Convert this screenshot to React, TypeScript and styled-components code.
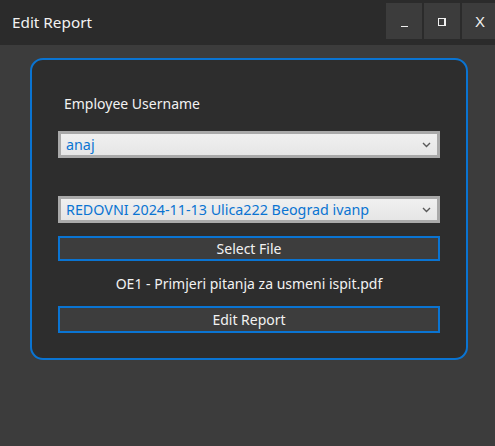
import React from "react";
import styled, { createGlobalStyle } from "styled-components";

const Global = createGlobalStyle`
  html, body { margin: 0; padding: 0; background: #3c3c3c; }
  body { font-family: "Noto Sans", "Open Sans", sans-serif; }
`;

const Window = styled.div`
  width: 495px;
  height: 446px;
  display: flex;
  flex-direction: column;
  background: #3c3c3c;
  overflow: hidden;
`;

const TitleBar = styled.div`
  height: 45px;
  flex: none;
  display: flex;
  align-items: center;
  background: #2b2b2b;
  padding-left: 12px;
`;

const Title = styled.div`
  flex: 1;
  color: #f2f2f2;
  font-size: 15.3px;
  margin-top: -1px;
`;

const WinButtons = styled.div`
  align-self: flex-start;
  margin-top: 3px;
  display: flex;
  gap: 2px;
  margin-right: -3px;
`;

const WinButton = styled.div`
  width: 36px;
  height: 36px;
  background: #3c3c3c;
  color: #f0f0f0;
  display: flex;
  align-items: center;
  justify-content: center;
  font-family: "Liberation Sans", sans-serif;
  font-size: 15px;
`;

const MaxBox = styled.div`
  width: 5px;
  height: 6px;
  border: 1px solid #f0f0f0;
  border-right-width: 2px;
  margin-top: 2px;
`;

const MinBar = styled.div`
  width: 7px;
  height: 1px;
  background: #f0f0f0;
  margin-top: 10px;
`;

const Body = styled.div`
  padding: 13px 0 0 30px;
`;

const Card = styled.div`
  box-sizing: border-box;
  width: 438px;
  height: 302px;
  border: 2px solid #0a74d2;
  border-radius: 13px;
  background: #2d2d2d;
  padding: 0 26px;
  display: flex;
  flex-direction: column;
`;

const Label = styled.div`
  color: #f2f2f2;
  font-size: 14px;
  padding-left: 6px;
  margin-top: 34px;
  height: 20px;
  line-height: 20px;
`;

const Combo = styled.div<{ $top: number }>`
  box-sizing: border-box;
  height: 27px;
  margin-top: ${(p) => p.$top}px;
  border: 3px solid #a9a9a9;
  background: linear-gradient(#f0f0f0, #e6e6e6);
  display: flex;
  align-items: center;
  padding: 0 6px 0 5px;
  color: #0a74d2;
  font-size: 14.3px;
`;

const ComboText = styled.span`
  flex: 1;
  white-space: nowrap;
  margin-top: -1px;
`;

const Chevron = () => (
  <svg width="9" height="6" viewBox="0 0 9 6">
    <path d="M1 1 L4.5 4.5 L8 1" fill="none" stroke="#5a5a5a" strokeWidth="1.4" />
  </svg>
);

const ActionButton = styled.div<{ $h: number; $top: number }>`
  box-sizing: border-box;
  height: ${(p) => p.$h}px;
  margin-top: ${(p) => p.$top}px;
  border: 2px solid #0a74d2;
  background: #3d3d3d;
  color: #f2f2f2;
  font-size: 14px;
  display: flex;
  align-items: center;
  justify-content: center;
`;

const FileName = styled.div`
  color: #f2f2f2;
  font-size: 14px;
  text-align: center;
  height: 20px;
  line-height: 20px;
  margin-top: 13px;
`;

export default function App() {
  return (
    <>
      <Global />
      <Window>
        <TitleBar>
          <Title>Edit Report</Title>
          <WinButtons>
            <WinButton>
              <MinBar />
            </WinButton>
            <WinButton>
              <MaxBox />
            </WinButton>
            <WinButton>X</WinButton>
          </WinButtons>
        </TitleBar>
        <Body>
          <Card>
            <Label>Employee Username</Label>
            <Combo $top={17}>
              <ComboText>anaj</ComboText>
              <Chevron />
            </Combo>
            <Combo $top={38}>
              <ComboText>REDOVNI 2024-11-13 Ulica222 Beograd ivanp</ComboText>
              <Chevron />
            </Combo>
            <ActionButton $h={25} $top={13}>Select File</ActionButton>
            <FileName>OE1 - Primjeri pitanja za usmeni ispit.pdf</FileName>
            <ActionButton $h={27} $top={12}>Edit Report</ActionButton>
          </Card>
        </Body>
      </Window>
    </>
  );
}
